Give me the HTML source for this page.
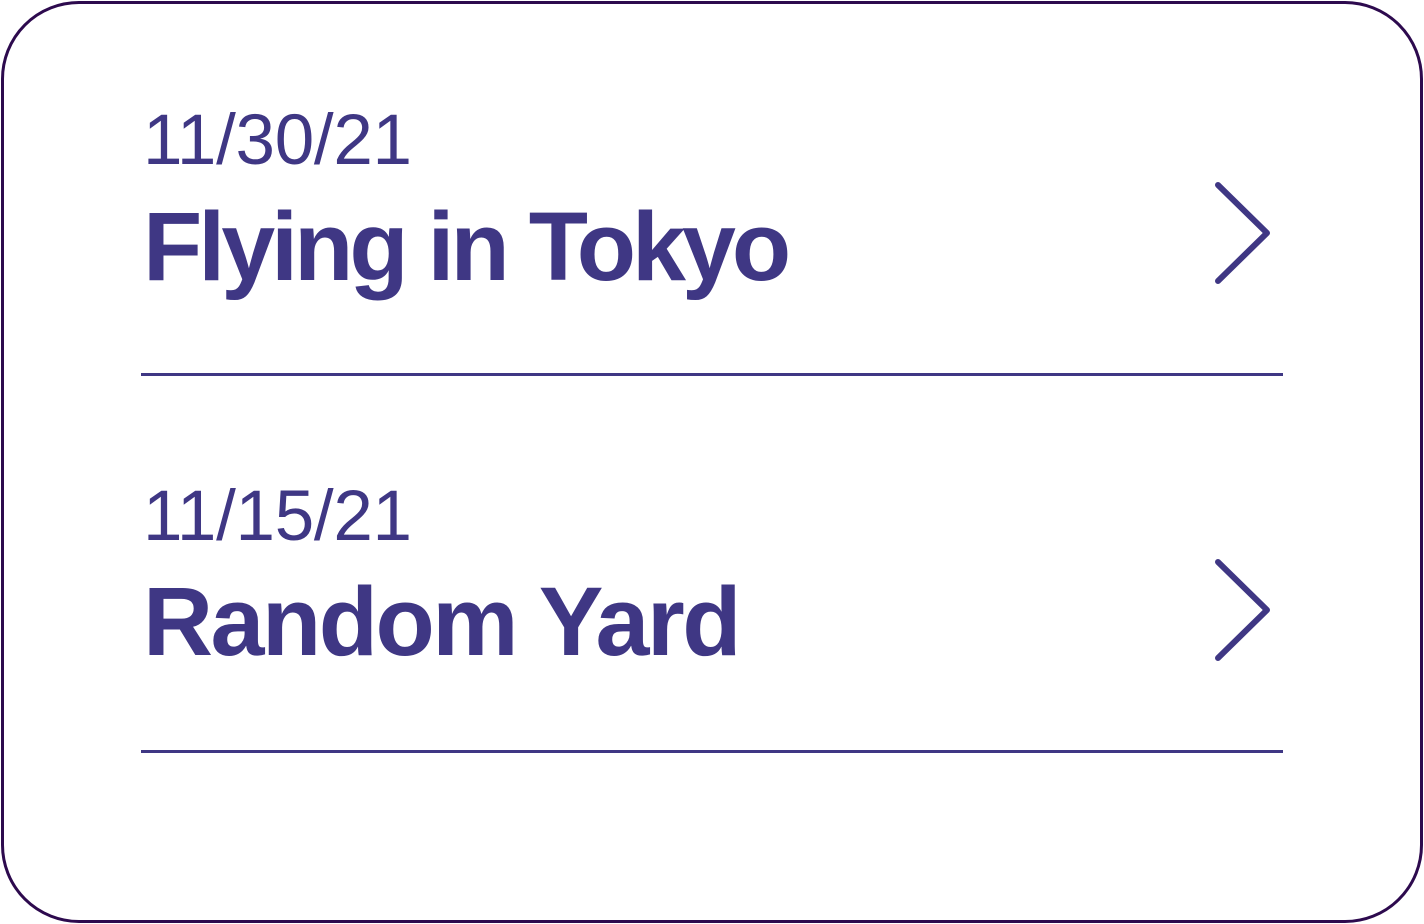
<!DOCTYPE html>
<html><head><meta charset="utf-8"><style>
html,body{margin:0;padding:0;background:#fff;}
body{width:1424px;height:924px;position:relative;overflow:hidden;font-family:"Liberation Sans",sans-serif;color:#3f3784;}
.card{position:absolute;left:1px;top:1px;width:1416px;height:916px;border:3px solid #2d0a4e;border-radius:78px;}
.d{position:absolute;left:143px;font-size:71px;line-height:1;letter-spacing:-0.3px;white-space:nowrap;}
.t{position:absolute;left:143px;font-size:97px;line-height:1;font-weight:bold;letter-spacing:-4px;white-space:nowrap;}
.ln{position:absolute;left:141px;width:1142px;height:3px;background:#3f3784;}
svg{position:absolute;left:0;top:0;}
</style></head><body>
<div class="card"></div>
<div class="d" style="top:105px">11/30/21</div>
<div class="t" style="top:198px">Flying in Tokyo</div>
<div class="ln" style="top:373px"></div>
<div class="d" style="top:481px">11/15/21</div>
<div class="t" style="top:573px;letter-spacing:-2.5px">Random Yard</div>
<div class="ln" style="top:750px"></div>
<svg width="1424" height="924"><g fill="none" stroke="#3f3784" stroke-width="6" stroke-linecap="round" stroke-linejoin="round">
<path d="M1218 185 L1267 233 L1218 281"/>
<path d="M1218 562 L1267 610 L1218 658"/>
</g></svg>
</body></html>
